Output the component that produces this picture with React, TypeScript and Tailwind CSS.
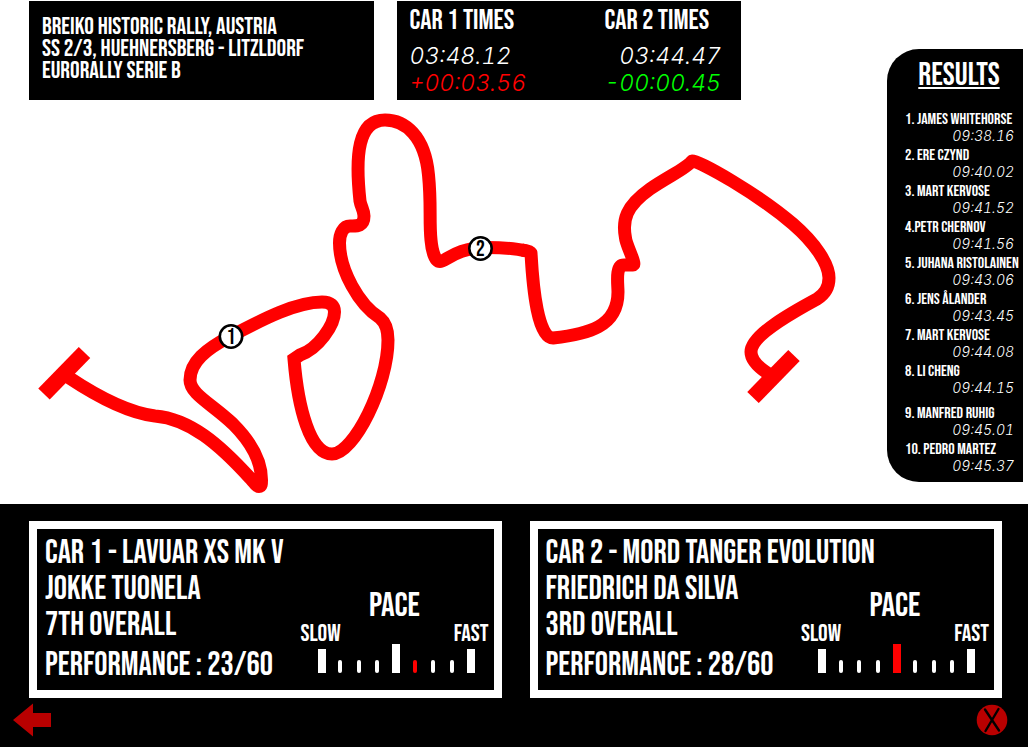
import { type ReactNode } from "react";

type Result = { place: string; name: string; time: string };

const results: Result[] = [
  { place: "1.", name: " JAMES WHITEHORSE", time: "09:38.16" },
  { place: "2.", name: " ERE CZYND", time: "09:40.02" },
  { place: "3.", name: " MART KERVOSE", time: "09:41.52" },
  { place: "4.", name: "PETR CHERNOV", time: "09:41.56" },
  { place: "5.", name: " JUHANA RISTOLAINEN", time: "09:43.06" },
  { place: "6.", name: " JENS ÅLANDER", time: "09:43.45" },
  { place: "7.", name: " MART KERVOSE", time: "09:44.08" },
  { place: "8.", name: " LI CHENG", time: "09:44.15" },
  { place: "9.", name: " MANFRED RUHIG", time: "09:45.01" },
  { place: "10.", name: " PEDRO MARTEZ", time: "09:45.37" },
];

function Time({ children, className }: { children: ReactNode; className: string }) {
  return (
    <p className={`font-['Inter',sans-serif] font-light italic tabular-nums ${className}`}>{children}</p>
  );
}

function StageInfo() {
  return (
    <div className="bg-black pt-[15px] pl-[13px] text-[24px] leading-[22px]">
      <p>BREIKO HISTORIC RALLY, AUSTRIA</p>
      <p>SS 2/3, HUEHNERSBERG - LITZLDORF</p>
      <p>EURORALLY SERIE B</p>
    </div>
  );
}

function SplitTimes() {
  return (
    <div className="flex justify-between bg-black pt-1 pr-5 pb-[3px] pl-[13px]">
      <section>
        <h2 className="text-[28px] leading-[32px]">CAR 1 TIMES</h2>
        <Time className="mt-[6px] text-[23px] leading-[27px]">03:48.12</Time>
        <Time className="text-[23px] leading-[27px] text-[#f00]">+00:03.56</Time>
      </section>
      <section>
        <h2 className="text-[28px] leading-[32px]">CAR 2 TIMES</h2>
        <Time className="mt-[6px] text-right text-[23px] leading-[27px]">03:44.47</Time>
        <Time className="text-right text-[23px] leading-[27px] text-[#0f0]">-00:00.45</Time>
      </section>
    </div>
  );
}

function Marker({ x, y, label }: { x: number; y: number; label: string }) {
  return (
    <g>
      <circle cx={x} cy={y} r="11.2" fill="#fff" stroke="#000" strokeWidth="2.6" />
      <text x={x} y={y + 7} textAnchor="middle" fontSize="22" fill="#000">
        {label}
      </text>
    </g>
  );
}

function StageMap() {
  return (
    <svg viewBox="0 100 887 404" className="block w-full" role="img" aria-label="Stage map">
      <g fill="none" stroke="#f00" strokeWidth="13">
        <path
          strokeLinejoin="miter"
          d="M68 377 C98 397 130 413 155 416 C190 419 219 444 250 478 C255 484 257 486.500 259 486.500 C261.500 486.500 261.500 484 261.500 480 C261.500 462 252 443 233 424 C212 404 190 394 190 380 C190 362 206 349 231 336 C265 318 297 302 322 302 C331 302 334.500 306 334.500 312 C334.500 325 318 349 300 355 L294 359 C298 408 310 454 332 454 C354 454 388 385 388 340 C388 330 386 323 380 318 C359 305 339.500 270 339.500 243 C339.500 234 343 226 350 226 C356 226 364 227 364 216 C364 210 361 207 360 201 C355 155 358 120 385 120 C405 120 425 136 428.500 175 C431.500 205 429 220 431 240 C432 251 435 261.500 440 261.500 C446 261.500 456 247.500 487 247.500 C502 247.500 516 248.500 526 251"
        />
        <path
          strokeLinejoin="round"
          d="M522 250 Q530 251 531 253 C533 290 538 338 553 338 C588 334 618 327 618 292 C618 284 615 265 624 265 L633 265 C637 265 626 245 625.500 238 C622 220 626 206 650 189 C669 176 687 168 692 161 C700 161 758 194 793 224 C815 243 829 264 829 278 C829 287 825 294 817 299 C793 312 751 335 751 352 C751 362 762 370 772 376"
        />
      </g>
      <g stroke="#f00" strokeWidth="16">
        <path d="M44 394 L84.500 352.500" />
        <path d="M753 397.500 L794 355.500" />
      </g>
      <Marker x={231} y={336.5} label="1" />
      <Marker x={480.5} y={248.5} label="2" />
    </svg>
  );
}

function Results() {
  return (
    <aside className="mt-[49px] mr-[5px] w-[136px] shrink-0 self-start rounded-l-[32px] bg-black pt-[8px] pb-[5px]">
      <h2 className="pl-2 text-center text-[32px] leading-[38px] underline decoration-2 underline-offset-2">
        RESULTS
      </h2>
      <ol className="mt-4 pl-[18px]">
        {results.map((r) => (
          <li key={r.place} className="pb-[3px] nth-9:mt-[6px]">
            <p className="text-[16px] leading-[17px] whitespace-nowrap">
              {r.place}
              {r.name}
            </p>
            <Time className="pr-[9px] text-right text-[14px] leading-[16px]">{r.time}</Time>
          </li>
        ))}
      </ol>
    </aside>
  );
}

function PaceGauge({ active }: { active: number }) {
  return (
    <div className="w-[188px] shrink-0">
      <h3 className="text-center text-[34px] leading-[36px]">PACE</h3>
      <div className="flex justify-between text-[24px] leading-[20px]">
        <span>SLOW</span>
        <span>FAST</span>
      </div>
      <div className="flex h-[29px] items-end justify-between pr-[14px] pl-[17px]">
        {Array.from({ length: 9 }, (_, i) => (
          <span key={i} className="flex w-2 justify-center">
            <span
              className={`${i === 4 ? "h-[29px] w-2" : i % 8 === 0 ? "h-6 w-2" : "h-[13px] w-1 rounded-full"} ${
                i === active ? "bg-[#f00]" : "bg-white"
              }`}
            />
          </span>
        ))}
      </div>
    </div>
  );
}

type CarProps = { title: string; driver: string; overall: string; performance: string; pace: number };

function CarCard({ title, driver, overall, performance, pace }: CarProps) {
  return (
    <section className="border-8 border-white pt-[6px] pr-[5px] pb-[7px] pl-[8px] text-[33px] leading-[36px]">
      <h2 className="whitespace-nowrap">{title}</h2>
      <div className="flex justify-between">
        <div className="whitespace-nowrap">
          <p>{driver}</p>
          <p>{overall}</p>
          <p className="mt-[4px]">PERFORMANCE : {performance}</p>
        </div>
        <div className="flex items-end pb-[10px]">
          <PaceGauge active={pace} />
        </div>
      </div>
    </section>
  );
}

export default function App() {
  return (
    <div className="flex min-h-screen flex-col bg-white font-['Bebas_Neue','Roboto_Condensed',sans-serif] text-white">
      <main className="flex">
        <div className="min-w-0 flex-1">
          <header className="grid grid-cols-2 gap-[23px] pt-px pr-[146px] pl-[29px]">
            <StageInfo />
            <SplitTimes />
          </header>
          <StageMap />
        </div>
        <Results />
      </main>
      <footer className="flex-1 bg-black pt-[17px]">
        <div className="grid grid-cols-2 gap-[28px] pr-[26px] pl-[29px]">
          <CarCard title="CAR 1 - LAVUAR XS MK V" driver="JOKKE TUONELA" overall="7TH OVERALL" performance="23/60" pace={5} />
          <CarCard title="CAR 2 - MORD TANGER EVOLUTION" driver="FRIEDRICH DA SILVA" overall="3RD OVERALL" performance="28/60" pace={4} />
        </div>
        <nav className="flex items-center justify-between pt-[5px] pr-5 pl-[13px]">
          <button type="button" aria-label="Back">
            <svg width="38" height="34" viewBox="0 0 38 34" className="block" fill="#b90000">
              <path d="M0 17 L20 0.500 V10 H38 V24 H20 V33.500 Z" />
            </svg>
          </button>
          <button type="button" aria-label="Close">
            <svg width="32" height="32" viewBox="0 0 32 32" className="block">
              <circle cx="16" cy="16" r="15.300" fill="#b90000" />
              <path d="M9 5.500 L23 26.500 M22.500 5 L9.500 27" stroke="#000" strokeWidth="2.400" strokeLinecap="round" />
            </svg>
          </button>
        </nav>
      </footer>
    </div>
  );
}
